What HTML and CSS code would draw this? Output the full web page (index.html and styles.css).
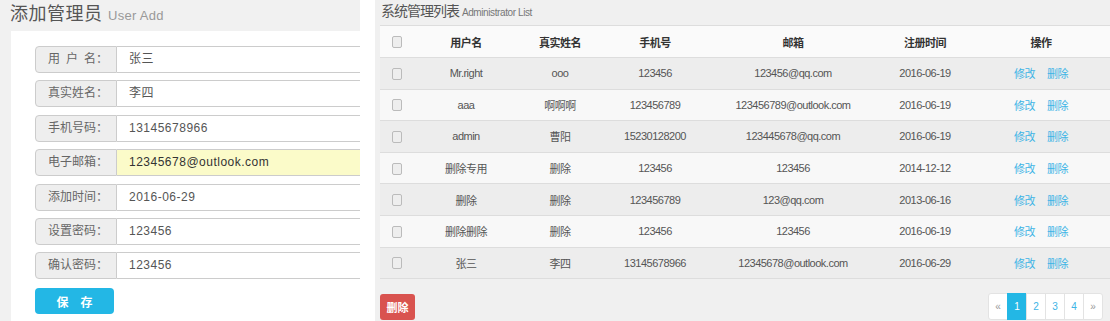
FILE: index.html
```html
<!DOCTYPE html>
<html lang="zh-CN">
  <head>
    <meta charset="UTF-8" />
    <meta name="viewport" content="width=device-width, initial-scale=1.0" />
    <title>管理员</title>
    <link rel="stylesheet" href="styles.css">
  </head>
  <body>
    <div class="add-panel">
      <h2 class="panel-title">添加管理员 <small>User Add</small></h2>
      <div class="form-card">
        <div class="input-group">
          <span class="input-label">用&ensp;户&ensp;名：</span>
          <span class="input-field">张三</span>
        </div>
        <div class="input-group">
          <span class="input-label">真实姓名：</span>
          <span class="input-field">李四</span>
        </div>
        <div class="input-group">
          <span class="input-label">手机号码：</span>
          <span class="input-field">13145678966</span>
        </div>
        <div class="input-group">
          <span class="input-label">电子邮箱：</span>
          <span class="input-field autofill">12345678@outlook.com</span>
        </div>
        <div class="input-group">
          <span class="input-label">添加时间：</span>
          <span class="input-field">2016-06-29</span>
        </div>
        <div class="input-group">
          <span class="input-label">设置密码：</span>
          <span class="input-field">123456</span>
        </div>
        <div class="input-group">
          <span class="input-label">确认密码：</span>
          <span class="input-field">123456</span>
        </div>
        <button class="btn-save">保&emsp;存</button>
      </div>
    </div>

    <div class="list-panel">
      <h2 class="list-title">系统管理列表 <small>Administrator List</small></h2>
      <table class="admin-table">
        <thead>
          <tr>
            <th class="col-check"><span class="check"></span></th>
            <th class="col-user">用户名</th>
            <th class="col-name">真实姓名</th>
            <th class="col-phone">手机号</th>
            <th class="col-mail">邮箱</th>
            <th class="col-date">注册时间</th>
            <th class="col-op">操作</th>
          </tr>
        </thead>
        <tbody>
          <tr>
            <td><span class="check"></span></td>
            <td>Mr.right</td><td>ooo</td><td>123456</td><td>123456@qq.com</td><td>2016-06-19</td>
            <td><a class="op">修改</a><a class="op">删除</a></td>
          </tr>
          <tr>
            <td><span class="check"></span></td>
            <td>aaa</td><td>啊啊啊</td><td>123456789</td><td>123456789@outlook.com</td><td>2016-06-19</td>
            <td><a class="op">修改</a><a class="op">删除</a></td>
          </tr>
          <tr>
            <td><span class="check"></span></td>
            <td>admin</td><td>曹阳</td><td>15230128200</td><td>123445678@qq.com</td><td>2016-06-19</td>
            <td><a class="op">修改</a><a class="op">删除</a></td>
          </tr>
          <tr>
            <td><span class="check"></span></td>
            <td>删除专用</td><td>删除</td><td>123456</td><td>123456</td><td>2014-12-12</td>
            <td><a class="op">修改</a><a class="op">删除</a></td>
          </tr>
          <tr>
            <td><span class="check"></span></td>
            <td>删除</td><td>删除</td><td>123456789</td><td>123@qq.com</td><td>2013-06-16</td>
            <td><a class="op">修改</a><a class="op">删除</a></td>
          </tr>
          <tr>
            <td><span class="check"></span></td>
            <td>删除删除</td><td>删除</td><td>123456</td><td>123456</td><td>2016-06-19</td>
            <td><a class="op">修改</a><a class="op">删除</a></td>
          </tr>
          <tr>
            <td><span class="check"></span></td>
            <td>张三</td><td>李四</td><td>13145678966</td><td>12345678@outlook.com</td><td>2016-06-29</td>
            <td><a class="op">修改</a><a class="op">删除</a></td>
          </tr>
        </tbody>
      </table>
      <div class="list-footer">
        <button class="btn-delete">删除</button>
        <ul class="pagination">
          <li>«</li>
          <li class="active">1</li>
          <li>2</li>
          <li>3</li>
          <li>4</li>
          <li>»</li>
        </ul>
      </div>
    </div>
  </body>
</html>
```

FILE: styles.css
```css
body {
  display: flex;
  height: 100vh;
  margin: 0;
  background: #fff;
  font-family: "Liberation Sans", "Noto Sans CJK SC", sans-serif;
  overflow: hidden;
}

/* left: add form */
.add-panel {
  display: flex;
  flex-direction: column;
  width: 360px;
  flex-shrink: 0;
  background: #f1f1f1;
  overflow: hidden;
}

.panel-title {
  height: 31px;
  box-sizing: border-box;
  margin: 0;
  padding: 5px 0 0 10px;
  font-size: 18px;
  line-height: 18px;
  font-weight: normal;
  color: #555;
  letter-spacing: 0.5px;
}

.panel-title small {
  font-size: 13px;
  color: #999;
  letter-spacing: 0.3px;
}

.form-card {
  flex: 1;
  margin-left: 11px;
  padding: 15px 0 0 24px;
  background: #fff;
}

.input-group {
  display: flex;
  height: 27px;
  margin-bottom: 7.4px;
  font-size: 12px;
  line-height: 25px;
  white-space: nowrap;
}

.input-label {
  flex-shrink: 0;
  width: 82px;
  box-sizing: border-box;
  padding-left: 12px;
  border: 1px solid #ccc;
  border-radius: 4px 0 0 4px;
  background: #eee;
  color: #666;
}

.input-field {
  flex-shrink: 0;
  width: 320px;
  padding: 0 12px;
  border: 1px solid #ccc;
  border-left: 0;
  color: #555;
  letter-spacing: 0.5px;
}

.input-field.autofill {
  background: #fbfbc9;
  color: #333;
}

.btn-save {
  display: block;
  width: 79px;
  height: 26px;
  margin-top: 9px;
  border: 0;
  border-radius: 4px;
  background: #23b7e5;
  color: #fff;
  font-family: inherit;
  font-size: 12px;
  font-weight: bold;
}

/* right: admin list */
.list-panel {
  flex: 1;
  margin-left: 15px;
  padding-left: 5px;
  background: #f0f0f0;
}

.list-title {
  height: 25px;
  box-sizing: border-box;
  margin: 0;
  padding: 3px 0 0 1px;
  font-size: 14px;
  line-height: 16px;
  font-weight: normal;
  color: #555;
  letter-spacing: -1px;
}

.list-title small {
  font-size: 10px;
  color: #777;
  letter-spacing: -0.4px;
}

.admin-table {
  width: 730px;
  border-collapse: collapse;
  table-layout: fixed;
  font-size: 11px;
  letter-spacing: -0.5px;
  color: #555;
}

.admin-table th,
.admin-table td {
  padding: 0;
  text-align: center;
  border-top: 1px solid #ddd;
}

.admin-table thead tr {
  height: 32px;
  background: #fafafa;
}

.admin-table th {
  color: #333;
  font-weight: bold;
}

.admin-table tbody tr {
  height: 31.6px;
}

.admin-table tbody tr:nth-child(odd) {
  background: #ededed;
}

.admin-table tbody tr:nth-child(even) {
  background: #f8f8f8;
}

.admin-table tbody tr:last-child td {
  border-bottom: 1px solid #ddd;
}

.col-check { width: 34px; }
.col-user { width: 104px; }
.col-name { width: 84px; }
.col-phone { width: 106px; }
.col-mail { width: 170px; }
.col-date { width: 94px; }

.check {
  display: inline-block;
  width: 8px;
  height: 10px;
  border: 1px solid #bbb;
  border-radius: 2px;
  background: #eee;
  vertical-align: middle;
}

.op {
  margin: 0 6px;
  color: #3cb4e6;
  cursor: pointer;
}

.list-footer {
  display: flex;
  justify-content: space-between;
  align-items: flex-start;
  margin-top: 15px;
}

.btn-delete {
  width: 35px;
  height: 26px;
  border: 0;
  border-radius: 3px;
  background: #d9534f;
  color: #fff;
  font-family: inherit;
  font-size: 11px;
  font-weight: bold;
}

.pagination {
  display: flex;
  margin: -1px 7px 0 0;
  padding: 0;
  list-style: none;
  font-size: 10px;
}

.pagination li {
  width: 20px;
  height: 27px;
  box-sizing: border-box;
  margin-left: -1px;
  border: 1px solid #e3e3e3;
  background: #fff;
  color: #3cb4e6;
  line-height: 25px;
  text-align: center;
}

.pagination li:first-child {
  border-radius: 3px 0 0 3px;
  color: #999;
}

.pagination li:last-child {
  border-radius: 0 3px 3px 0;
  color: #999;
}

.pagination li.active {
  border-color: #23b7e5;
  background: #23b7e5;
  color: #fff;
}
```
